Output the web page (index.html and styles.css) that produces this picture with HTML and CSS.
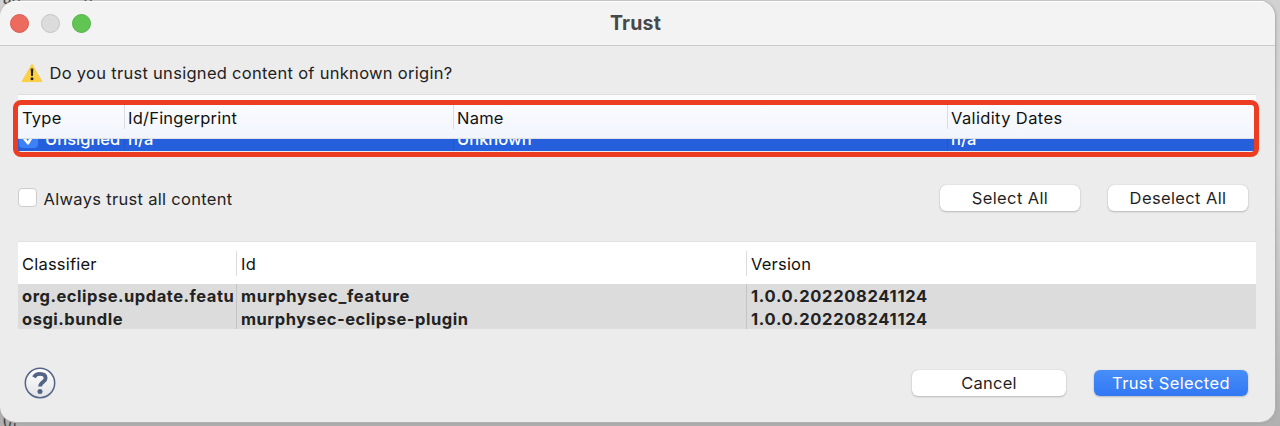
FILE: index.html
```html
<!DOCTYPE html>
<html lang="en">
<head>
<meta charset="utf-8">
<title>Trust</title>
<link rel="stylesheet" href="styles.css">
</head>
<body>
<div class="behind behind-top">aq&nbsp; &nbsp;&nbsp; &nbsp; , &nbsp; &nbsp;&nbsp; g</div>
<div class="behind behind-bottom">0f</div>
<main class="window">
  <header class="titlebar">
    <div class="lights"><i class="light red"></i><i class="light gray"></i><i class="light green"></i></div>
    <h1 class="title">Trust</h1>
  </header>
  <div class="question">
    <svg class="warn" viewBox="0 0 22 20" width="22" height="20"><path d="M11 1.200 21 18.600H1Z" fill="#fdcf47" stroke="#fdcf47" stroke-width="1" stroke-linejoin="round"/><path d="M9.700 5.500h2.600l-.4 7.500h-1.800Z" fill="#222"/><circle cx="11" cy="15.700" r="1.500" fill="#222"/></svg>
    <span class="t-question">Do you trust unsigned content of unknown origin?</span>
  </div>
  <section class="certs">
    <div class="certs-head">
      <div class="cell">Type</div><div class="cell">Id/Fingerprint</div><div class="cell">Name</div><div class="cell t-dates">Validity Dates</div>
    </div>
    <div class="certs-row">
      <div class="cell first"><svg class="tick" viewBox="0 0 19 19" width="19" height="19"><rect width="19" height="19" rx="4" fill="#3b82f7"/><path d="m5.500 10 3.500 4.300L14 6" fill="none" stroke="#fff" stroke-width="2.600" stroke-linecap="round" stroke-linejoin="round"/></svg><span>Unsigned</span></div><div class="cell"><span>n/a</span></div><div class="cell"><span>Unknown</span></div><div class="cell"><span>n/a</span></div>
    </div>
    <div class="highlight"></div>
  </section>
  <section class="options">
    <label class="always"><i class="box"></i><span>Always trust all content</span></label>
    <div class="actions"><button class="btn">Select All</button><button class="btn">Deselect All</button></div>
  </section>
  <section class="artifacts">
    <div class="art-head"><div class="cell">Classifier</div><div class="cell">Id</div><div class="cell">Version</div></div>
    <div class="art-row"><div class="cell">org.eclipse.update.featu</div><div class="cell t-feature">murphysec_feature</div><div class="cell t-number">1.0.0.202208241124</div></div>
    <div class="art-row"><div class="cell">osgi.bundle</div><div class="cell">murphysec-eclipse-plugin</div><div class="cell t-number">1.0.0.202208241124</div></div>
  </section>
  <footer class="footer">
    <svg class="help" viewBox="0 0 32 32" width="32" height="32"><defs><linearGradient id="g" x2="0" y2="1"><stop offset="0" stop-color="#fff"/><stop offset="1" stop-color="#e2e3e5"/></linearGradient></defs><circle cx="16" cy="16" r="14.700" fill="url(#g)" stroke="#536486" stroke-width="1.500"/><path d="M9.900 10.300C11.200 7.900 13.200 6.900 16 6.900c3.400 0 5.600 1.600 5.600 4.300 0 3.800-5.500 3.800-5.500 8.400" fill="none" stroke="#536486" stroke-width="3.900"/><circle cx="16" cy="24.500" r="2.500" fill="#536486"/></svg>
    <div class="final"><button class="btn wide cancel">Cancel</button><button class="btn wide primary">Trust Selected</button></div>
  </footer>
</main>
</body>
</html>
```
FILE: styles.css
```css
* { box-sizing: border-box; }
body { margin: 0; width: 1280px; height: 426px; padding-top: 1px; overflow: hidden; position: relative; background: linear-gradient(#d2d2d2, #d8d8d8 40%, #b0b0b0); font: 16.5px/20px Inter, "Liberation Sans", sans-serif; color: #222; }
.behind { position: absolute; left: 3px; font: italic 18px/20px "Liberation Serif", serif; color: #444; }
.behind-top { top: -12px; }
.behind-bottom { top: 411px; font-style: normal; }
.window { position: relative; width: 1276px; height: 422px; display: flex; flex-direction: column; background: #ececec; border-radius: 16px; border: solid #b3b3b3; border-width: 0 1px 1px 0; box-shadow: 0 0 3px #8888; overflow: hidden; }
.titlebar { height: 45px; flex: none; display: grid; grid-template-columns: 100px 1fr 104px; background: #f3f3f3; border-top: 1px solid #fff; border-bottom: 1px solid #cbcbcb; }
.lights { display: flex; gap: 12px; padding: 12px 0 0 10px; }
.light { width: 19px; height: 19px; border-radius: 50%; border: 1px solid; }
.red { background: #ed6a5e; border-color: #d95a50; }
.gray { background: #dcdcdc; border-color: #c4c4c4; }
.green { background: #61c554; border-color: #54b248; }
.title { margin: 0; padding-top: 10px; text-align: center; font-size: 19.5px; line-height: 22px; font-weight: 700; letter-spacing: .2px; color: #484848; }
.question { height: 48px; flex: none; padding: 17px 0 0 21px; display: flex; gap: 6.5px; }
.t-question { letter-spacing: .29px; }
.question span, .cell, .btn, .always { white-space: nowrap; }
.certs { position: relative; flex: none; margin-left: 18px; width: 1238px; height: 57px; border-top: 1px solid #dedede; }
.certs-head, .certs-row { display: grid; grid-template-columns: 107px 329px 494px 1fr; }
.certs-head { height: 44px; padding-top: 10px; background: linear-gradient(#fcfdff, #f2f5fd); border-bottom: 1px solid #dedfe2; color: #111; letter-spacing: .23px; }
.cell { padding-left: 3px; }
.cell:first-child { padding-left: 4px; }
.certs-head .cell { height: 24px; padding-top: 3px; }
.t-dates { letter-spacing: .37px; }
.certs-head .cell:not(:last-child), .art-head .cell:not(:last-child) { border-right: 1px solid #dcdcdf; }
.certs-row { height: 12px; overflow: hidden; background: #265fdb; color: #fff; font-weight: 500; }
.certs-row .cell { height: 12px; }
.certs-row .cell:not(:last-child) { border-right: 1px solid #2356c6; }
.certs-row span { display: block; margin-top: -10px; }
.certs-row .first { display: flex; gap: 7px; padding-left: 1px; }
.tick { flex: none; margin-top: -10px; }
.highlight { position: absolute; left: -5px; top: 5px; width: 1246px; height: 57px; border: 5px solid #ec3d22; border-radius: 8px; }
.options { height: 90px; flex: none; padding: 34px 27px 0 18px; display: flex; justify-content: space-between; }
.always { display: flex; gap: 6.5px; padding-top: 3px; letter-spacing: .31px; }
.box { width: 19px; height: 19px; background: #fff; border: 1px solid #ccc; border-radius: 4px; }
.always span { padding-top: 1px; }
.actions { display: flex; gap: 28px; }
.btn { width: 140px; height: 26px; margin: 0; padding: 0; border: 0; border-radius: 6px; background: #fff; box-shadow: 0 0 1px #aaa, 0 1px 2px #bbb; font: inherit; line-height: 26px; letter-spacing: .37px; color: #1f1f1f; }
.artifacts { flex: none; margin-left: 18px; width: 1238px; height: 88px; border-top: 1px solid #e0e0e0; background: #dcdcdc; }
.art-head, .art-row { display: grid; grid-template-columns: 219px 510px 1fr; }
.art-head { height: 42px; padding-top: 9px; background: #fff; color: #111; letter-spacing: .2px; }
.art-head .cell { height: 25px; padding-top: 3px; }
.art-row { height: 22px; font-weight: 700; line-height: 25px; letter-spacing: .52px; }
.art-row .cell { height: 22px; }
.art-row + .art-row, .art-row + .art-row .cell { height: 23px; line-height: 27px; }
.t-feature { letter-spacing: .68px; }
.t-number { letter-spacing: .7px; }
.art-row .cell:not(:last-child) { border-right: 1px solid #c4c4c4; }
.artifacts .cell:not(:first-child) { padding-left: 4px; }
.footer { height: 94px; padding: 38px 27px 0 24px; display: flex; justify-content: space-between; }
.final { display: flex; gap: 28px; padding-top: 3px; }
.wide { width: 154px; }
.cancel { letter-spacing: .2px; }
.primary { background: linear-gradient(#478ef8, #3277f5); color: #fff; }
```
